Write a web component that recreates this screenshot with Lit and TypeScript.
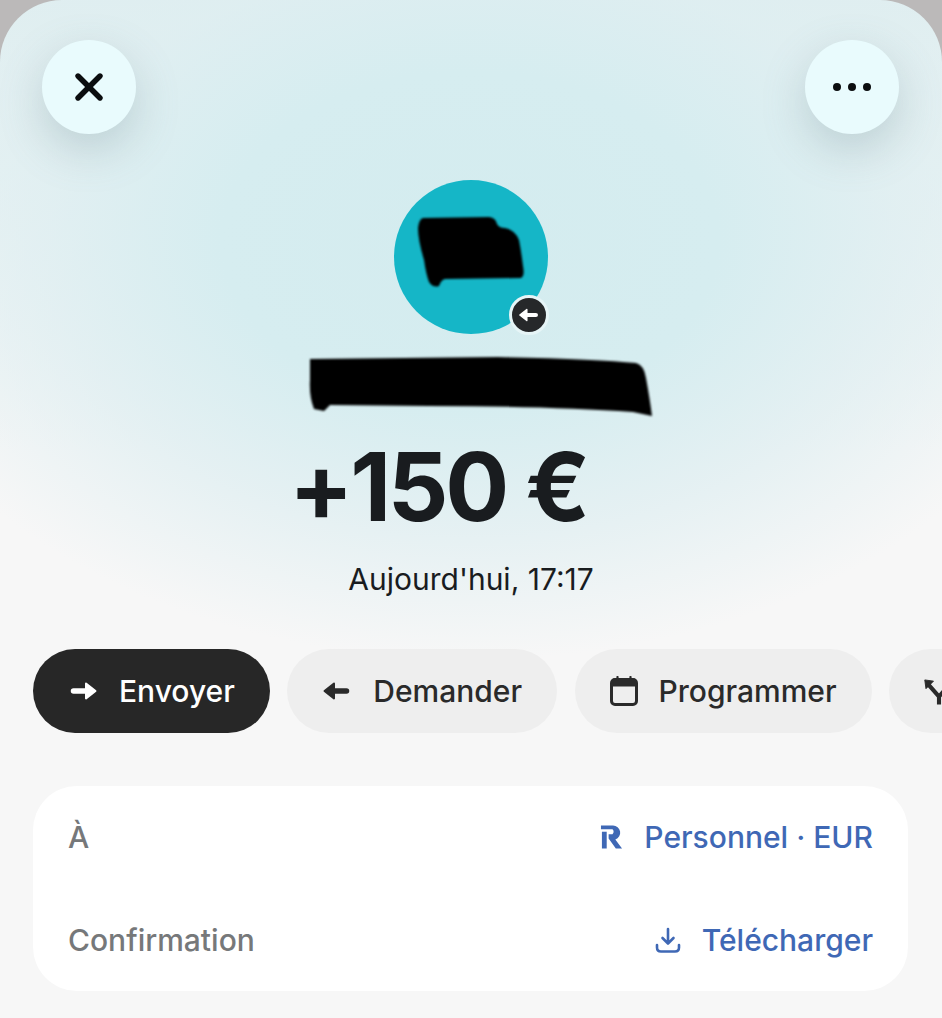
import { LitElement, html, css, svg } from "lit";
import { customElement } from "lit/decorators.js";

const arrowRight = svg`<path d="M5.500 12H20" stroke="currentColor" stroke-width="5.500" stroke-linecap="round"/><path d="M18 4.500 27.500 12 18 19.500z" fill="currentColor" stroke="currentColor" stroke-width="2" stroke-linejoin="round"/>`;
const arrowLeft = svg`<path d="M24.500 12H10" stroke="currentColor" stroke-width="5.500" stroke-linecap="round"/><path d="M12 4.500 2.500 12 12 19.500z" fill="currentColor" stroke="currentColor" stroke-width="2" stroke-linejoin="round"/>`;

@customElement("app-root")
export class AppRoot extends LitElement {
  static styles = css`
    :host {
      display: block;
      width: 942px;
      height: 1018px;
      overflow: hidden;
      background: #bbb9b9;
      font-family: Inter, "Liberation Sans", sans-serif;
      color: #191c1f;
    }

    .sheet {
      height: 1018px;
      box-sizing: border-box;
      border-radius: 62px 62px 0 0;
      overflow: hidden;
      background:
        radial-gradient(ellipse 620px 420px at 470px 240px, #d4ecef 0%, #d6edf0 40%, rgba(222, 238, 241, 0.75) 68%, rgba(247, 247, 247, 0) 100%),
        linear-gradient(#e0eef0 0, #e8f2f3 170px, #f7f7f7 450px);
    }

    .top {
      display: flex;
      justify-content: space-between;
      padding: 40px 43px 0 42px;
    }

    .round {
      width: 94px;
      height: 94px;
      border-radius: 50%;
      background: #e9fbfd;
      box-shadow: 0 16px 44px rgba(110, 140, 145, 0.3);
      display: flex;
      align-items: center;
      justify-content: center;
      color: #0b0d0f;
    }

    .hero {
      display: flex;
      flex-direction: column;
      align-items: center;
      padding-top: 46px;
    }

    .avatar {
      position: relative;
      width: 154px;
      height: 154px;
      border-radius: 50%;
      background: #15b6c7;
    }

    .avatar-mark {
      position: absolute;
      left: 23px;
      top: 36px;
      filter: blur(0.8px);
    }

    .badge {
      position: absolute;
      left: 115px;
      top: 115px;
      width: 34px;
      height: 34px;
      border-radius: 50%;
      background: #26282a;
      border: 3px solid #e6f5f7;
      display: flex;
      align-items: center;
      justify-content: center;
      color: #fff;
    }

    .name-mark {
      display: block;
      margin-top: 22px;
      margin-left: 17px;
      filter: blur(0.8px);
    }

    .amount {
      margin-top: 12px;
      margin-right: 66px;
      font-size: 95px;
      line-height: 114px;
      font-weight: 700;
      letter-spacing: -3.300px;
      white-space: nowrap;
    }

    .date {
      margin-top: 17px;
      font-size: 30px;
      line-height: 36px;
      white-space: nowrap;
    }

    .actions {
      display: flex;
      gap: 17.500px;
      padding: 52px 0 0 33px;
      white-space: nowrap;
    }

    .pill {
      flex: none;
      height: 84px;
      border-radius: 42px;
      box-sizing: border-box;
      background: #eeeeee;
      display: flex;
      align-items: center;
      gap: 21px;
      padding: 0 35px;
      font-size: 30px;
      font-weight: 500;
      color: #2a2a2a;
    }

    .pill.primary {
      background: #272727;
      color: #fff;
    }

    .pill.clipped {
      width: 100px;
    }

    .card {
      margin: 53px 34px 0 33px;
      height: 205px;
      box-sizing: border-box;
      border-radius: 44px;
      background: #fff;
      padding: 0 35px;
    }

    .row {
      height: 103px;
      padding-bottom: 2px;
      box-sizing: border-box;
      display: flex;
      align-items: center;
      justify-content: space-between;
      font-size: 30px;
      font-weight: 500;
      color: #76787a;
    }

    .row + .row {
      height: 102px;
      padding-bottom: 0;
    }

    .link {
      display: flex;
      align-items: center;
      gap: 21px;
      color: #3f68b5;
    }
  `;

  render() {
    return html`
      <div class="sheet">
        <div class="top">
          <div class="round">
            <svg width="30" height="30" viewBox="0 0 30 30" fill="none" stroke="currentColor" stroke-width="5.400" stroke-linecap="round">
              <path d="M4 4 26 26"/><path d="M26 4 4 26"/>
            </svg>
          </div>
          <div class="round">
            <svg width="40" height="10" viewBox="0 0 40 10" fill="currentColor">
              <circle cx="5" cy="5" r="4"/><circle cx="20" cy="5" r="4"/><circle cx="35" cy="5" r="4"/>
            </svg>
          </div>
        </div>

        <div class="hero">
          <div class="avatar">
            <svg class="avatar-mark" width="110" height="76" viewBox="0 0 110 76">
              <path d="M6 2 Q2 3 1 12 Q1 24 7 44 Q9 58 12 66 Q16 72 22 70 Q24 64 28 63 L104 62 Q108 60 106 50 Q104 34 102 24 Q98 14 88 12 Q82 12 80 8 Q79 2 72 1 Z" fill="#000"/>
            </svg>
            <div class="badge">
              <svg width="22" height="20" viewBox="0 0 30 24" fill="none">${arrowLeft}</svg>
            </div>
          </div>

          <svg class="name-mark" width="344" height="62" viewBox="0 0 344 62">
            <path d="M2 3 L190 1 Q290 3 328 7 Q336 9 338 22 Q342 44 344 60 L325 56 Q240 50 120 50 L22 49 L16 55 L6 53 Q1 40 2 24 Z" fill="#000"/>
          </svg>

          <div class="amount">+150 €</div>
          <div class="date">Aujourd'hui, 17:17</div>
        </div>

        <div class="actions">
          <div class="pill primary">
            <svg width="30" height="24" viewBox="0 0 30 24" fill="none">${arrowRight}</svg>
            Envoyer
          </div>
          <div class="pill">
            <svg width="30" height="24" viewBox="0 0 30 24" fill="none">${arrowLeft}</svg>
            Demander
          </div>
          <div class="pill">
            <svg width="28" height="30" viewBox="0 0 28 30" fill="none">
              <rect x="1.500" y="3.500" width="25" height="25" rx="3.500" stroke="currentColor" stroke-width="3"/>
              <path d="M1.500 5Q1.500 2.500 4.500 2.500h19q3 0 3 2.500V10.500H1.500z" fill="currentColor"/>
              <path d="M7.500 1v2.500M20.500 1v2.500" stroke="currentColor" stroke-width="2.200" stroke-linecap="round"/>
            </svg>
            Programmer
          </div>
          <div class="pill clipped">
            <svg width="38" height="34" viewBox="0 0 38 34" fill="none">
              <path d="M4 7 19 24v10M34 7 19 24" stroke="currentColor" stroke-width="5.200"/>
              <path d="M1 3 12 4.500 2.500 14z" fill="currentColor" stroke="currentColor" stroke-width="1.200" stroke-linejoin="round"/>
              <path d="M37 3 26 4.500 35.500 14z" fill="currentColor" stroke="currentColor" stroke-width="1.200" stroke-linejoin="round"/>
            </svg>
          </div>
        </div>

        <div class="card">
          <div class="row">
            <span>À</span>
            <span class="link">
              <svg width="23" height="26" viewBox="0 0 24 26" fill="none">
                <path d="M1 1h12.500a7.500 7.500 0 0 1 2.500 14.600L23 25h-6.500L9 14.500V10h4a3.200 3.200 0 0 0 0-5H1z" fill="currentColor"/>
                <path d="M2 7.500h5V25H2z" fill="currentColor"/>
              </svg>
              Personnel · EUR
            </span>
          </div>
          <div class="row">
            <span>Confirmation</span>
            <span class="link">
              <svg width="26" height="26" viewBox="0 0 26 26" fill="none" stroke="currentColor" stroke-width="2.600" stroke-linecap="round" stroke-linejoin="round">
                <path d="M13 2v14M7.500 11l5.500 5.500 5.500-5.500"/>
                <path d="M2 18v2.500Q2 24.500 6 24.500h14q4 0 4-4V18"/>
              </svg>
              Télécharger
            </span>
          </div>
        </div>
      </div>
    `;
  }
}

declare global {
  interface HTMLElementTagNameMap {
    "app-root": AppRoot;
  }
}
